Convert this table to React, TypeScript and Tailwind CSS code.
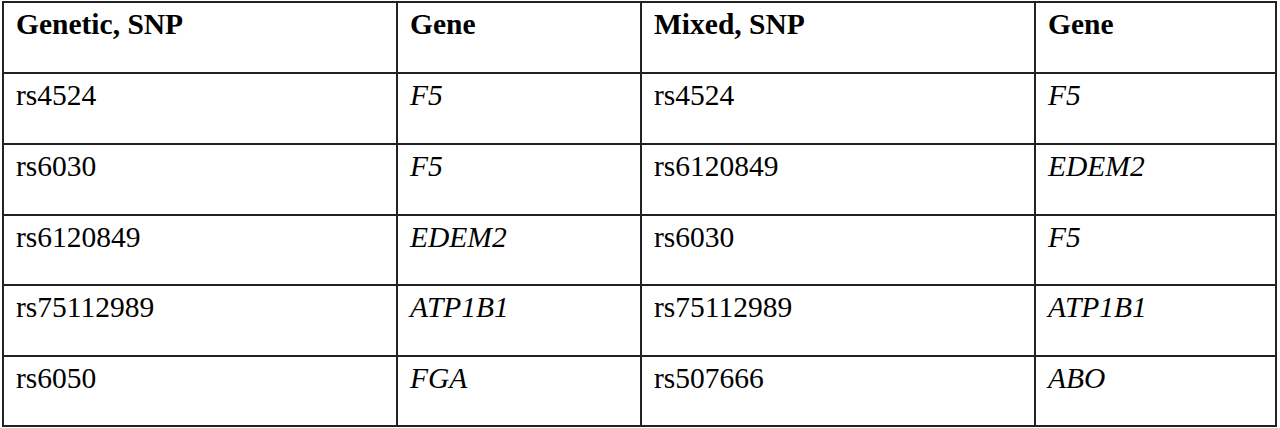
import React from "react";

const rows: [string, string, string, string][] = [
  ["rs4524", "F5", "rs4524", "F5"],
  ["rs6030", "F5", "rs6120849", "EDEM2"],
  ["rs6120849", "EDEM2", "rs6030", "F5"],
  ["rs75112989", "ATP1B1", "rs75112989", "ATP1B1"],
  ["rs6050", "FGA", "rs507666", "ABO"],
];
const heights = ["h-[71px]", "h-[71px]", "h-[70px]", "h-[71px]", "h-[70px]"];

export default function App() {
  return (
    <div className="w-[1280px] h-[428px] bg-white pt-[1px] pl-[2px]" style={{ fontFamily: '"Liberation Serif", "Times New Roman", serif' }}>
      <div className="grid grid-cols-[394px_244px_394px_241px] w-fit border-l-2 border-t-2 border-[#222] text-black text-[29.5px] leading-none">
        {["Genetic, SNP", "Gene", "Mixed, SNP", "Gene"].map((h, i) => (
          <div key={i} className="h-[71px] border-r-2 border-b-2 border-[#222] pl-[12px] pt-[7px] font-bold">
            {h}
          </div>
        ))}
        {rows.map((r, ri) =>
          r.map((c, ci) => (
            <div
              key={ri + "-" + ci}
              className={`${heights[ri]} border-r-2 border-b-2 border-[#222] pl-[12px] pt-[7px] ${ci % 2 === 1 ? "italic" : ""}`}
            >
              {c}
            </div>
          ))
        )}
      </div>
    </div>
  );
}
